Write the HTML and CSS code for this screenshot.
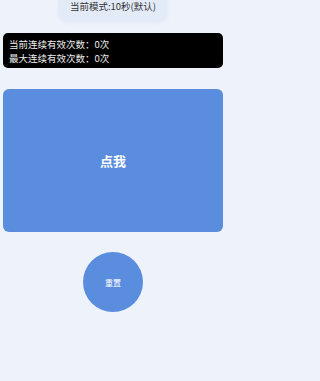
FILE: index.html
```html
<!DOCTYPE html>
<html lang="zh-CN">
<head>
<meta charset="utf-8">
<meta name="viewport" content="width=226">
<link rel="stylesheet" href="styles.css">
</head>
<body>
<div class="page">
  <div class="mode">当前模式:10秒(默认)</div>
  <div class="stats">
    <div class="stat">当前连续有效次数：0次</div>
    <div class="stat">最大连续有效次数：0次</div>
  </div>
  <div class="tap">点我</div>
  <div class="reset">重置</div>
</div>
</body>
</html>
```
FILE: styles.css
```css
html, body {
  margin: 0;
  padding: 0;
  background: #eef2fb;
  font-family: "Noto Sans CJK SC", "Noto Sans", sans-serif;
}
.page {
  width: 226px;
  display: flex;
  flex-direction: column;
  align-items: center;
  padding: 0 3px;
  height: 381px;
  box-sizing: border-box;
  overflow: hidden;
}
.mode {
  margin-top: -9px;
  padding: 10px 11px 10px;
  font-size: 9.5px;
  line-height: 10px;
  color: #333;
  background: #e4ebf8;
  border-radius: 8px;
  box-shadow: 0 1px 4px rgba(120, 140, 190, 0.12);
}
.stats {
  align-self: stretch;
  margin-top: 12px;
  background: #000;
  border-radius: 5px;
  padding: 4px 6px 3px;
  color: #eee;
  font-size: 9.5px;
  line-height: 14px;
}
.tap {
  align-self: stretch;
  margin-top: 21px;
  height: 143px;
  background: #5b8ddf;
  border-radius: 6px;
  display: flex;
  align-items: center;
  justify-content: center;
  color: #fff;
  font-size: 13px;
  font-weight: bold;
}
.reset {
  margin-top: 20px;
  width: 60px;
  height: 60px;
  border-radius: 50%;
  background: #5b8ddf;
  display: flex;
  align-items: center;
  justify-content: center;
  color: #fff;
  font-size: 8px;
}
```
